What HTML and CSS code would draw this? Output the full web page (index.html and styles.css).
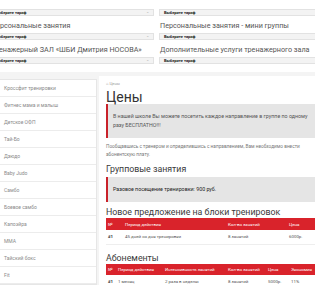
FILE: index.html
```html
<!doctype html>
<html lang="ru">
<head>
<meta charset="utf-8">
<meta name="viewport" content="initial-scale=1">
<title>Цены</title>
<link rel="stylesheet" href="styles.css">
</head>
<body>
  <div class="tariffs">
    <div class="tariff-col">
      <div class="tariff-select"><span>Выберите тариф</span><span class="arrow">&#8964;</span></div>
      <h3 class="tariff-title">Персональные занятия</h3>
      <div class="tariff-select"><span>Выберите тариф</span><span class="arrow">&#8964;</span></div>
      <h3 class="tariff-title">Тренажерный ЗАЛ «ШБИ Дмитрия НОСОВА»</h3>
      <div class="tariff-select"><span>Выберите тариф</span><span class="arrow">&#8964;</span></div>
    </div>
    <div class="tariff-col">
      <div class="tariff-select"><span>Выберите тариф</span><span class="arrow">&#8964;</span></div>
      <h3 class="tariff-title">Персональные занятия - мини группы</h3>
      <div class="tariff-select"><span>Выберите тариф</span><span class="arrow">&#8964;</span></div>
      <h3 class="tariff-title">Дополнительные услуги тренажерного зала</h3>
      <div class="tariff-select"><span>Выберите тариф</span><span class="arrow">&#8964;</span></div>
    </div>
  </div>

  <div class="page cf">
    <ul class="sidebar">
      <li>Кроссфит тренировки</li>
      <li>Фитнес мама и малыш</li>
      <li>Детское ОФП</li>
      <li>Тай-Бо</li>
      <li>Дзюдо</li>
      <li>Baby Judo</li>
      <li>Самбо</li>
      <li>Боевое самбо</li>
      <li>Капоэйра</li>
      <li>MMA</li>
      <li>Тайский бокс</li>
      <li>Fit</li>
    </ul>

    <div class="content">
      <div class="crumbs">&#8962; Цены</div>
      <h1>Цены</h1>
      <div class="note">В нашей школе Вы можете посетить каждое направление в группе по одному разу БЕСПЛАТНО!!!</div>
      <p class="intro">Пообщавшись с тренером и определившись с направлением, Вам необходимо внести абонентскую плату.</p>

      <h2>Групповые занятия</h2>
      <div class="note dark">Разовое посещение тренировки: 900 руб.</div>

      <h2>Новое предложение на блоки тренировок</h2>
      <table class="prices blocks">
        <tr><th>№</th><th>Период действия</th><th>Кол-во занятий</th><th>Цена</th></tr>
        <tr><td class="num">#1</td><td>45 дней со дня тренировки</td><td>8 занятий</td><td>6000р.</td></tr>
      </table>

      <h2>Абонементы</h2>
      <table class="prices subs">
        <tr><th>№</th><th>Период действия</th><th>Интенсивность занятий</th><th>Кол-во занятий</th><th>Цена</th><th>Экономия</th></tr>
        <tr><td class="num">#1</td><td>1 месяц</td><td>2 раза в неделю</td><td>8 занятий</td><td>5000р.</td><td>11%</td></tr>
      </table>
    </div>
  </div>
</body>
</html>
```

FILE: styles.css
```css
  .cf:before,
  .cf:after {
    content: " ";
    display: table;
  }

  .cf:after {
    clear: both;
  }

  * {
    box-sizing: border-box;
  }

  html,
  body {
    margin: 0;
    overflow: hidden;
  }

  body {
    width: 315px;
    height: 285px;
    font-family: Roboto, "Liberation Sans", sans-serif;
    color: #333;
    background-color: #fff;
  }

  /* tariff pickers */
  .tariffs {
    display: flex;
    gap: 5px;
    margin-left: -10px;
    padding-top: 9px;
    height: 72px;
  }

  .tariff-col {
    width: 164px;
    flex: none;
  }

  .tariff-select {
    display: flex;
    justify-content: space-between;
    height: 7px;
    padding: 0 4px 0 4px;
    border: 1px solid #e2e2e2;
    background-color: #f3f3f3;
    font-size: 4px;
    font-weight: 700;
    line-height: 5px;
    color: #222;
  }

  .tariff-select .arrow {
    font-weight: 400;
    color: #aaa;
    line-height: 3px;
  }

  .tariff-title {
    margin: 5px 0 2px 1px;
    font-size: 7.2px;
    font-weight: 400;
    line-height: 10px;
    color: #555;
    white-space: nowrap;
  }

  /* lower part */
  .page {
    background-color: #f4f4f4;
    padding-top: 4px;
    height: 213px;
  }

  .sidebar {
    float: left;
    width: 97px;
    margin: 3px 0 0;
    padding: 0;
    list-style: none;
    background-color: #fff;
    border: 1px solid #e6e6e6;
    border-left: none;
  }

  .sidebar li {
    height: 17px;
    padding-left: 4px;
    border-bottom: 1px solid #ececec;
    font-size: 5px;
    line-height: 16px;
    color: #8a8a8a;
  }

  .content {
    margin-left: 99px;
    min-height: 220px;
    padding: 5px 0 0 7px;
    background-color: #fff;
  }

  .crumbs {
    font-size: 4px;
    line-height: 6px;
    color: #999;
  }

  h1 {
    margin: 3px 0 0;
    font-size: 14px;
    font-weight: 400;
    line-height: 14px;
    color: #333;
  }

  h2 {
    margin: 4px 0 0;
    font-size: 8.8px;
    font-weight: 400;
    line-height: 12px;
    color: #3a3a3a;
  }

  .note {
    padding: 8px 6px 8px 5px;
    border-left: 2px solid #c9222a;
    background-color: #e5e5e5;
    font-size: 5.3px;
    line-height: 9px;
    color: #555;
  }

  .note.dark {
    margin-top: 2px;
    color: #222;
  }

  .intro {
    max-width: 200px;
    margin: 5px 0 0;
    font-size: 4.75px;
    line-height: 8px;
    color: #777;
  }

  .prices {
    width: 212px;
    margin-top: 0;
    border-collapse: collapse;
    table-layout: fixed;
    font-size: 4.4px;
  }

  .prices th {
    height: 12px;
    padding: 0 0 0 2px;
    background-color: #d9232b;
    font-weight: 400;
    color: #fff;
    text-align: left;
  }

  .prices td {
    height: 14px;
    padding: 0 0 0 2px;
    border-bottom: 1px solid #eee;
    color: #555;
  }

  .prices .num {
    font-weight: 700;
    color: #333;
  }

  .blocks {
    margin-bottom: 7px;
  }

  .blocks th:nth-child(1) { width: 17px; }
  .blocks th:nth-child(2) { width: 103px; }
  .blocks th:nth-child(3) { width: 61px; }

  .subs th {
    height: 11px;
  }

  .subs th:nth-child(1) { width: 10px; }
  .subs th:nth-child(2) { width: 47px; }
  .subs th:nth-child(3) { width: 63px; }
  .subs th:nth-child(4) { width: 40px; }
  .subs th:nth-child(5) { width: 23px; }
  .subs th:nth-child(6) { width: 40px; }
```
